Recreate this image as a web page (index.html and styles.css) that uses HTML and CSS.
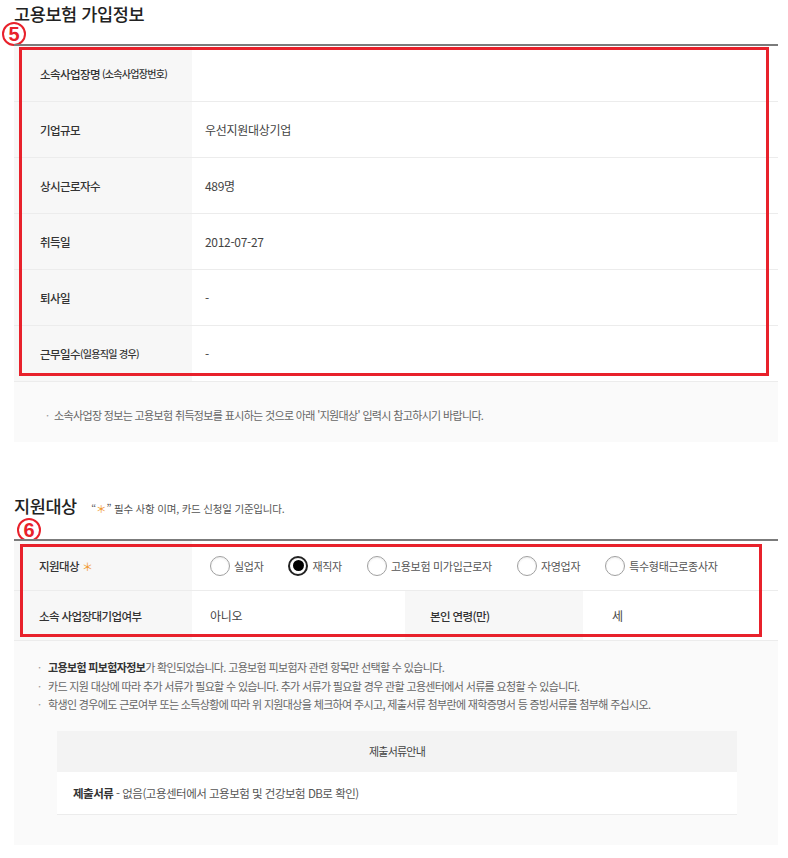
FILE: index.html
```html
<!DOCTYPE html>
<html lang="ko">
<head>
<meta charset="utf-8">
<title>고용보험 가입정보</title>
<link rel="stylesheet" href="styles.css">
</head>
<body>
<div class="page">
  <section class="sec sec-1">
    <h2 class="sec-title">고용보험 가입정보</h2>
    <span class="badge badge-5">5</span>
    <div class="tbl tbl-1">
      <div class="row"><div class="th">소속사업장명 <small>(소속사업장번호)</small></div><div class="td"></div></div>
      <div class="row"><div class="th">기업규모</div><div class="td">우선지원대상기업</div></div>
      <div class="row"><div class="th">상시근로자수</div><div class="td">489명</div></div>
      <div class="row"><div class="th">취득일</div><div class="td">2012-07-27</div></div>
      <div class="row"><div class="th">퇴사일</div><div class="td">-</div></div>
      <div class="row"><div class="th">근무일수<small class="tight">(일용직일 경우)</small></div><div class="td">-</div></div>
      <div class="mark mark-1"></div>
    </div>
    <div class="note note-1">
      <p><span class="dot">·</span>소속사업장 정보는 고용보험 취득정보를 표시하는 것으로 아래 '지원대상' 입력시 참고하시기 바랍니다.</p>
    </div>
  </section>

  <section class="sec sec-2">
    <h2 class="sec-title">지원대상 <span class="sub">“<span class="star">＊</span>” 필수 사항 이며, 카드 신청일 기준입니다.</span></h2>
    <span class="badge badge-6">6</span>
    <div class="tbl tbl-2">
      <div class="row row-radio">
        <div class="th">지원대상 <span class="star">＊</span></div>
        <div class="td td-radio">
          <label class="radio"><span class="circle"></span><span class="rlabel">실업자</span></label>
          <label class="radio"><span class="circle checked"></span><span class="rlabel">재직자</span></label>
          <label class="radio"><span class="circle"></span><span class="rlabel">고용보험 미가입근로자</span></label>
          <label class="radio"><span class="circle"></span><span class="rlabel">자영업자</span></label>
          <label class="radio"><span class="circle"></span><span class="rlabel">특수형태근로종사자</span></label>
        </div>
      </div>
      <div class="row row-split">
        <div class="th">소속 사업장대기업여부</div>
        <div class="td td-a">아니오</div>
        <div class="th th-b">본인 연령(만)</div>
        <div class="td td-b">세</div>
      </div>
      <div class="mark mark-2"></div>
    </div>
    <div class="note note-2">
      <ul class="bullets">
        <li><span class="dot">·</span><b>고용보험 피보험자정보</b>가 확인되었습니다. 고용보험 피보험자 관련 항목만 선택할 수 있습니다.</li>
        <li><span class="dot">·</span>카드 지원 대상에 따라 추가 서류가 필요할 수 있습니다. 추가 서류가 필요할 경우 관할 고용센터에서 서류를 요청할 수 있습니다.</li>
        <li><span class="dot">·</span>학생인 경우에도 근로여부 또는 소득상황에 따라 위 지원대상을 체크하여 주시고, 제출서류 첨부란에 재학증명서 등 증빙서류를 첨부해 주십시오.</li>
      </ul>
      <div class="docs">
        <div class="docs-head">제출서류안내</div>
        <div class="docs-body"><b>제출서류</b> - 없음(고용센터에서 고용보험 및 건강보험 DB로 확인)</div>
      </div>
    </div>
  </section>
</div>
</body>
</html>
```

FILE: styles.css
```css
html, body {
  margin: 0;
  padding: 0;
  background: #ffffff;
}

.page {
  width: 764px;
  padding: 2px 10px 0 14px;
  font-family: "Noto Sans CJK KR", "Noto Sans", sans-serif;
  color: #333;
}

.sec {
  position: relative;
}

.sec-2 {
  margin-top: 52px;
}

.sec-title {
  margin: 0 0 18px;
  font-size: 17.5px;
  line-height: 24px;
  font-weight: 500;
  letter-spacing: -0.4px;
  color: #222;
}

.sec-title .sub {
  margin-left: 10px;
  font-size: 10.5px;
  font-weight: 400;
  letter-spacing: -0.2px;
  color: #555;
}

.star {
  color: #f0962a;
  font-weight: 400;
}

.badge {
  position: absolute;
  width: 24px;
  height: 24px;
  border: 2px solid #e8212b;
  border-radius: 50%;
  box-sizing: border-box;
  color: #e8212b;
  font-family: "Liberation Sans", "Noto Sans", sans-serif;
  font-weight: 700;
  font-size: 20px;
  line-height: 21px;
  text-align: center;
  background: #fff;
}

.badge-5 {
  left: -12px;
  top: 20px;
}

.badge-6 {
  left: 3px;
  top: 24px;
}

.tbl {
  position: relative;
  border-top: 2px solid #7b7b7b;
}

.row {
  display: grid;
  grid-template-columns: 178px 1fr;
  border-bottom: 1px solid #ececec;
  box-sizing: border-box;
}

.tbl-1 .row {
  height: 56px;
}

.tbl-2 .row {
  height: 50px;
}

.th {
  display: flex;
  align-items: center;
  padding-left: 26px;
  background: #f7f7f7;
  font-size: 11.5px;
  font-weight: 500;
  letter-spacing: -0.6px;
  color: #333;
  white-space: nowrap;
}

.th small {
  font-size: 10px;
  letter-spacing: -0.7px;
  margin-left: 2px;
}

.th small.tight {
  margin-left: 0;
}

.td {
  display: flex;
  align-items: center;
  padding-left: 13px;
  font-size: 12px;
  letter-spacing: -0.3px;
  color: #444;
}

.tbl-2 .th {
  padding-left: 25px;
}

.th .star {
  margin-left: 3px;
  font-size: 11px;
}

.td-radio {
  padding-left: 18px;
}

.radio {
  display: inline-flex;
  align-items: center;
  margin-right: 25px;
}

.circle {
  position: relative;
  width: 20px;
  height: 20px;
  border: 1px solid #a0a0a0;
  border-radius: 50%;
  box-sizing: border-box;
  background: #fff;
  box-shadow: inset 0 1px 2px rgba(0, 0, 0, 0.08);
}

.circle.checked {
  border: 2px solid #222;
}

.circle.checked::after {
  content: "";
  position: absolute;
  left: 2.5px;
  top: 2.5px;
  width: 11px;
  height: 11px;
  border-radius: 50%;
  background: #000;
}

.rlabel {
  margin-left: 4px;
  font-size: 11px;
  letter-spacing: -0.3px;
  color: #555;
  white-space: nowrap;
}

.row-split {
  grid-template-columns: 178px 213px 178px 1fr;
}

.td-a {
  padding-left: 18px;
}

.th-b {
  padding-left: 24px;
}

.td-b {
  padding-left: 29px;
}

.mark {
  position: absolute;
  border: 3px solid #e8212b;
  box-sizing: border-box;
  pointer-events: none;
}

.mark-1 {
  left: 5px;
  top: 1px;
  width: 750px;
  height: 329px;
}

.mark-2 {
  left: 6px;
  top: 3px;
  width: 742px;
  height: 93px;
}

.note {
  background: #fafafa;
  font-size: 11px;
  letter-spacing: -0.65px;
  color: #666;
}

.note-1 {
  height: 60px;
  padding: 6px 0 0 32px;
  box-sizing: border-box;
  display: flex;
  align-items: center;
}

.note p {
  margin: 0;
}

.dot {
  display: inline-block;
  width: 8px;
  color: #999;
}

.note-2 {
  padding: 17px 41px 30px 24px;
}

.bullets {
  list-style: none;
  margin: 0;
  padding: 0;
}

.bullets li {
  line-height: 18.5px;
  white-space: nowrap;
}

.bullets li .dot {
  width: 10px;
}

.bullets b {
  font-weight: 700;
  color: #333;
}

.docs {
  margin: 17px 0 0 19px;
}

.docs-head {
  height: 41px;
  display: flex;
  align-items: center;
  justify-content: center;
  background: #f3f3f3;
  font-size: 11px;
  letter-spacing: -0.8px;
  color: #444;
}

.docs-body {
  height: 43px;
  box-sizing: border-box;
  display: flex;
  align-items: center;
  padding-left: 16px;
  background: #fff;
  border-bottom: 1px solid #ececec;
  font-size: 11.5px;
  letter-spacing: -0.5px;
  color: #555;
  white-space: pre;
}

.docs-body b {
  font-weight: 700;
  color: #333;
}
```
